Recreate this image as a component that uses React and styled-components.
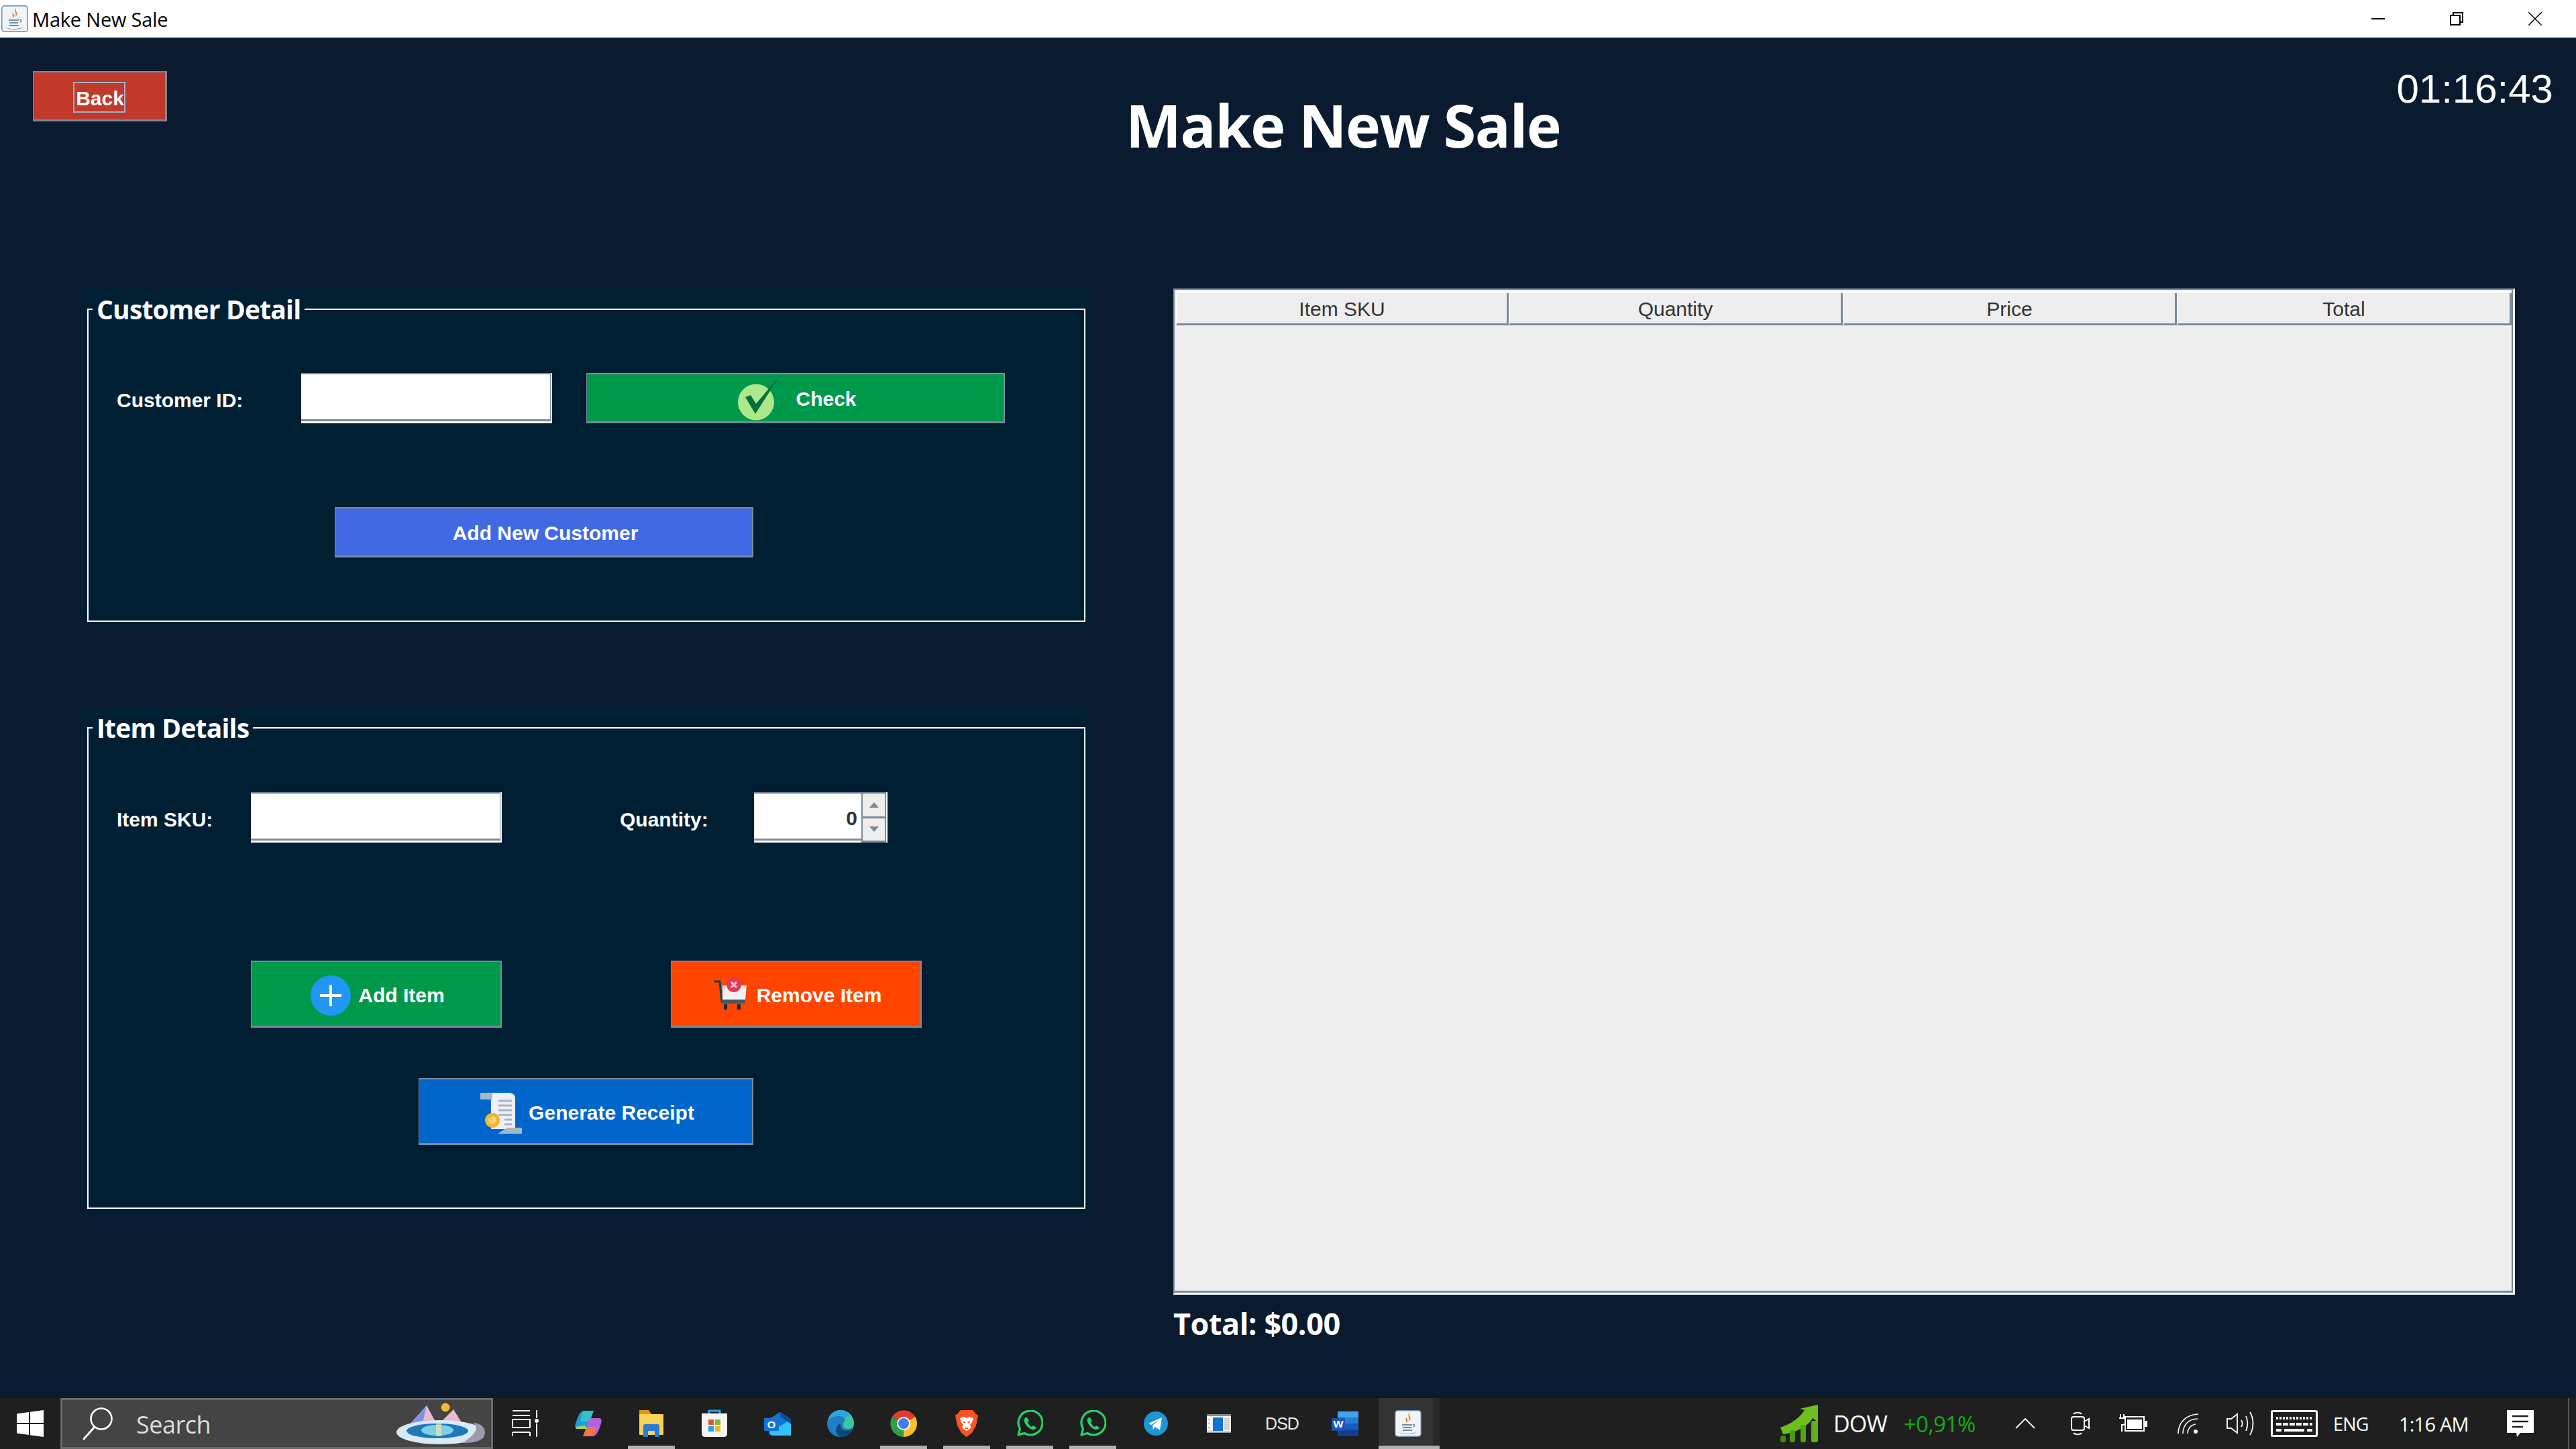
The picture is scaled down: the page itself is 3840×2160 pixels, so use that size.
import styled, { createGlobalStyle } from 'styled-components';

const GlobalStyle = createGlobalStyle`
  html, body {
    margin: 0;
    padding: 0;
    background: #0a1a2f;
  }
  * {
    box-sizing: border-box;
  }
`;

const uiFont = `'Open Sans', 'Noto Sans', sans-serif`;
const javaFont = `'Liberation Sans', Arial, sans-serif`;
const edge = '#7b8a9a';

const JavaLogo = ({ size = 40 }) => (
  <svg width={size} height={size} viewBox="0 0 40 40">
    <rect x="0.75" y="0.75" width="38.5" height="38.5" rx="4" fill="#f2f4f6" stroke="#6f8ca6" strokeWidth="1.5" />
    <path d="M22 4c-5 5 3 8-2 14 1-1 6-5 2-9-1-1 0-2 0-5zM18 11c-4 3 1 5-1 8 3-2 3-4 1-6z" fill="#e07a25" />
    <path d="M11 21h15v2H11zM12 25h13v2H12zM27 21c4-1 5 3 1 5l-1-1c2-1 2-3 0-3zM12 29h14v2H12zM7 33c4 3 20 3 25-1-2 5-23 5-25 1z" fill="#6d8ca8" />
  </svg>
);

const CheckIcon = () => (
  <svg width="56" height="72" viewBox="0 0 56 72" overflow="visible">
    <circle cx="28" cy="40.500" r="27" fill="#aee88a" />
    <path d="M12 33l15 25L64 0 28 43 20 30z" fill="#04703e" />
  </svg>
);

const PlusIcon = () => (
  <svg width="60" height="62" viewBox="0 0 60 62">
    <circle cx="30" cy="31" r="30" fill="#2196f3" />
    <path d="M14 31h32M30 15v32" stroke="#fff" strokeWidth="4" />
  </svg>
);

const CartIcon = () => (
  <svg width="52" height="54" viewBox="0 0 52 54">
    <path d="M0 6h9l3 31" stroke="#0f4560" strokeWidth="3" fill="none" />
    <path d="M13 12h36l-2 21H13z" fill="#f1f1f1" />
    <rect x="11" y="33" width="36" height="6" fill="#4b5660" />
    <rect x="15" y="40" width="5" height="8" fill="#143040" />
    <rect x="35" y="40" width="5" height="8" fill="#143040" />
    <circle cx="30" cy="11" r="11" fill="#e23a58" />
    <path d="M26 7l8 8M34 7l-8 8" stroke="#f6c6cf" strokeWidth="3" />
  </svg>
);

const ReceiptIcon = () => (
  <svg width="62" height="64" viewBox="0 0 62 64">
    <path d="M2 2h40c6 0 10 3 10 8v46H16V12C16 6 12 4 2 8z" fill="#edf1f7" />
    <path d="M0 2h18v10H0z" fill="#a9b6c9" />
    <path d="M40 54h22v9H26z" fill="#a9b6c9" />
    <path d="M27 14h20M27 21h20M27 28h20M27 35h20M36 42h11M36 49h11" stroke="#aab2c0" strokeWidth="3" />
    <circle cx="18" cy="43" r="11" fill="#f6b42c" />
    <circle cx="18" cy="43" r="6" fill="#f9d47a" />
  </svg>
);

const WindowsLogo = () => (
  <svg width="40" height="40" viewBox="0 0 40 40">
    <path d="M0 5.500l18-2.500v16H0zM20 2.700L40 0v19H20zM0 21h18v16L0 34.500zM20 21h20v19l-20-2.700z" fill="#fff" />
  </svg>
);

const SearchGlyph = () => (
  <svg width="48" height="50" viewBox="0 0 48 50">
    <circle cx="29" cy="18" r="15.500" fill="none" stroke="#fff" strokeWidth="2.600" />
    <path d="M19 30L3 48" stroke="#fff" strokeWidth="2.800" strokeLinecap="round" />
  </svg>
);

const MountainWidget = () => (
  <svg width="134" height="62" viewBox="0 0 134 62">
    <circle cx="74" cy="7" r="6.500" fill="#f8b732" />
    <path d="M14 40L46 4l16 30 24-24 20 32z" fill="#e7bccb" />
    <path d="M14 40L46 4l-8 34z" fill="#7f95e0" />
    <ellipse cx="66" cy="44" rx="65" ry="18" fill="#d7eaf6" />
    <path d="M100 60c24 0 33-6 33-16 0-8-8-14-18-14 8 6 8 14-15 30z" fill="#9b9cab" />
    <ellipse cx="62" cy="42" rx="46" ry="11" fill="#1f78b8" />
    <ellipse cx="62" cy="41" rx="24" ry="8" fill="#7fd0e6" />
    <rect x="60" y="30" width="8" height="20" fill="#e9e7a8" opacity="0.7" />
  </svg>
);

const TaskViewIcon = () => (
  <svg width="40" height="40" viewBox="0 0 40 40" fill="none" stroke="#fff" strokeWidth="2">
    <path d="M1 1h26M1 8h26M1 14h26v12H1zM1 33h26M1 39V33M27 39v-6M37 0v12M37 20v20" />
    <circle cx="37" cy="16" r="2" fill="#fff" />
  </svg>
);

const CopilotIcon = () => (
  <svg width="40" height="40" viewBox="0 0 40 40">
    <path d="M14 1h14L18 28H4C-1 28 0 22 2 17 5 8 8 1 14 1z" fill="#1d9ae0" />
    <path d="M14 1h14l-6 16H8C10 8 11 1 14 1z" fill="#2fc4c8" />
    <path d="M26 39H12l10-27h14c5 0 4 6 2 11-3 9-6 16-12 16z" fill="#b264dc" />
    <path d="M26 39H12l6-14h14c-2 7-3 14-6 14z" fill="#f4734a" />
    <path d="M18 28H4c-2 0-3-1-3-3l14-2z" fill="#a9d636" />
  </svg>
);

const ExplorerIcon = () => (
  <svg width="36" height="40" viewBox="0 0 36 40">
    <path d="M0 0h14l4 6v8H0z" fill="#d79a12" />
    <rect y="6" width="36" height="31" rx="1" fill="#fbd158" />
    <path d="M6 40V24c0-2 1-3 3-3h18c2 0 3 1 3 3v16h-7v-9H13v9z" fill="#2b7cd3" />
  </svg>
);

const StoreIcon = () => (
  <svg width="40" height="42" viewBox="0 0 40 42">
    <path d="M12 6V2h16v4" fill="none" stroke="#27a8e4" strokeWidth="3" />
    <path d="M1 6h38v30c0 3-2 5-5 5H6c-3 0-5-2-5-5z" fill="#f4f4f4" />
    <rect x="11" y="15" width="8" height="8" fill="#e8522c" />
    <rect x="21" y="15" width="8" height="8" fill="#7fba2a" />
    <rect x="11" y="25" width="8" height="8" fill="#1fa3e8" />
    <rect x="21" y="25" width="8" height="8" fill="#fbb90c" />
  </svg>
);

const OutlookIcon = () => (
  <svg width="40" height="35" viewBox="0 0 40 40" preserveAspectRatio="none">
    <path d="M8 12L24 0l16 12v28H14c-3 0-6-2-6-5z" fill="#35c2f2" />
    <path d="M8 12L24 0l16 12-16 12z" fill="#0f78d4" />
    <path d="M24 0l16 12v8L24 8z" fill="#0a4ea0" />
    <rect x="0" y="10" width="22" height="22" fill="#1272d6" />
    <BadgeLetter x="11" y="27">O</BadgeLetter>
  </svg>
);

const EdgeIcon = () => (
  <svg width="40" height="40" viewBox="0 0 40 40">
    <circle cx="20" cy="20" r="20" fill="#1e7ec6" />
    <path d="M2 14C5 4 13 0 20 0c11 0 20 9 20 20 0 4-3 8-8 8-6 0-8-3-8-6 0-6 4-6 2-10-3-4-14-5-24 2z" fill="#3cc7a0" />
    <path d="M26 12c-3-4-14-5-24 2 2-8 10-14 18-14 6 0 12 4 14 8-3 1-6 2-8 4z" fill="#29a6e0" />
    <path d="M38 28c-2 6-8 12-16 12-2 0-6-1-8-6-2-4 0-12 6-14-1 8 4 14 18 8z" fill="#10467e" />
  </svg>
);

const ChromeIcon = () => (
  <svg width="40" height="40" viewBox="0 0 40 40">
    <path d="M20 20L3 10A20 20 0 0 1 37.300 10z" fill="#e33b2e" />
    <path d="M20 20l17.300-10A20 20 0 0 1 20 40z" fill="#fbc02d" />
    <path d="M20 20v20A20 20 0 0 1 3 10z" fill="#2f9e44" />
    <circle cx="20" cy="20" r="10" fill="#fff" />
    <circle cx="20" cy="20" r="8" fill="#3f7fe8" />
  </svg>
);

const BraveIcon = () => (
  <svg width="34" height="40" viewBox="0 0 34 40">
    <path d="M8 0h18l4 5 4 3-3 15-6 11-8 6-8-6-6-11L0 8l4-3z" fill="#fb5420" />
    <path d="M7 12l6-2 4 2 4-2 6 2-2 6-3 4 2 4-7 5-7-5 2-4-3-4z" fill="#fff" />
    <path d="M12 17l3 2M22 17l-3 2M15 27h4" stroke="#fb5420" strokeWidth="2" />
  </svg>
);

const WhatsAppIcon = () => (
  <svg width="40" height="40" viewBox="0 0 40 40">
    <path d="M3 37l2.500-9A18 18 0 1 1 12 34.500z" fill="none" stroke="#25d366" strokeWidth="3.200" strokeLinejoin="round" />
    <path d="M14 11c-2 1-3 3-2 6 2 6 6 10 12 12 3 1 5-1 6-3l-5-3-2 2c-3-1-5-4-6-7l2-2-3-5z" fill="#25d366" />
  </svg>
);

const TelegramIcon = () => (
  <svg width="36" height="36" viewBox="0 0 36 36">
    <circle cx="18" cy="18" r="18" fill="#1f96d3" />
    <path d="M7 18l20-9-3 19-7-5-3 4-1-6 9-8-11 7z" fill="#fff" />
  </svg>
);

const AppIcon = () => (
  <svg width="36" height="28" viewBox="0 0 36 28">
    <rect width="36" height="28" fill="#f4f4f4" />
    <rect width="36" height="3" fill="#8d8d8d" />
    <rect y="26" width="36" height="2" fill="#9a9a9a" />
    <rect x="9" y="5" width="15" height="20" fill="#0f74d1" />
    <path d="M26 7h8M26 10h8M26 13h8M26 16h8M26 19h8M26 22h8M2 8h3M2 14h3M2 20h3" stroke="#9a9a9a" strokeWidth="1.200" />
  </svg>
);

const WordIcon = () => (
  <svg width="40" height="37" viewBox="0 0 40 40" preserveAspectRatio="none">
    <rect x="9" width="31" height="10" fill="#41a5ee" />
    <rect x="9" y="10" width="31" height="10" fill="#2b7cd3" />
    <rect x="9" y="20" width="31" height="10" fill="#185abd" />
    <rect x="9" y="30" width="31" height="10" fill="#103f91" />
    <rect y="11" width="20" height="20" fill="#1a56b8" />
    <BadgeLetter x="10" y="26">W</BadgeLetter>
  </svg>
);

const ChartIcon = () => (
  <svg width="56" height="56" viewBox="0 0 56 56">
    <path d="M0 34c18-6 30-16 36-26l-7-2 27-6v26l-8-6C42 32 22 42 4 44z" fill="#6fbf1a" />
    <rect x="0" y="46" width="8" height="10" rx="3" fill="#3a8c10" />
    <rect x="14" y="38" width="8" height="18" rx="3" fill="#489c12" />
    <rect x="30" y="30" width="8" height="26" rx="3" fill="#52a814" />
    <rect x="46" y="24" width="10" height="32" rx="3" fill="#5cb216" />
  </svg>
);

const CaretIcon = () => (
  <svg width="30" height="16" viewBox="0 0 30 16" fill="none" stroke="#fff" strokeWidth="1.800">
    <path d="M1 15L15 1l14 14" />
  </svg>
);

const CameraIcon = () => (
  <svg width="28" height="36" viewBox="0 0 28 36" fill="none" stroke="#fff" strokeWidth="2">
    <path d="M4 4c2-3 10-3 12 0M4 32c2 3 10 3 12 0" />
    <rect x="1" y="8" width="19" height="20" rx="3" />
    <path d="M20 15l7-4v14l-7-4" />
  </svg>
);

const BatteryIcon = () => (
  <svg width="42" height="28" viewBox="0 0 42 28" fill="none" stroke="#fff" strokeWidth="2">
    <path d="M2 0v6M7 0v6M0 6h9v7c0 2-2 3-5 3v10" />
    <rect x="9" y="4" width="28" height="21" />
    <rect x="12" y="8" width="22" height="14" fill="#fff" stroke="none" />
    <rect x="38" y="10" width="4" height="9" fill="#fff" stroke="none" />
  </svg>
);

const WifiIcon = () => (
  <svg width="32" height="30" viewBox="0 0 32 30" fill="none" stroke="#fff" strokeWidth="1.600">
    <path d="M1 30C1 14 12 2 31 1M8 30C8 18 16 8 30 8M15 30c0-7 5-13 12-14" />
    <circle cx="27" cy="27" r="3" fill="#fff" stroke="none" />
  </svg>
);

const SpeakerIcon = () => (
  <svg width="42" height="36" viewBox="0 0 42 36" fill="none" stroke="#fff" strokeWidth="1.800">
    <path d="M1 11h6l9-7v28l-9-7H1zM22 13c2 3 2 7 0 10M29 7c3 7 3 15 0 22M35 1c6 10 6 24 0 34" />
  </svg>
);

const KeyboardIcon = () => (
  <svg width="70" height="40" viewBox="0 0 70 40">
    <rect x="1.500" y="1.500" width="67" height="37" rx="1" fill="none" stroke="#fff" strokeWidth="3" />
    <path d="M8 12h54" stroke="#fff" strokeWidth="4" strokeDasharray="3 2" />
    <path d="M8 21h54" stroke="#fff" strokeWidth="4" strokeDasharray="8 2" />
    <path d="M8 30h8M20 30h30M54 30h8" stroke="#fff" strokeWidth="4" />
  </svg>
);

const NotificationIcon = () => (
  <svg width="40" height="40" viewBox="0 0 40 40">
    <path d="M0 0h40v34H20l-5 6-1-6H0z" fill="#fff" />
    <path d="M8 9h24M8 17h24M8 25h16" stroke="#222" strokeWidth="2.400" />
  </svg>
);

const columns = ['Item SKU', 'Quantity', 'Price', 'Total'];

export default function App() {
  const taskIcons = [
    { id: 'copilot', icon: <CopilotIcon /> },
    { id: 'explorer', icon: <ExplorerIcon />, open: true },
    { id: 'store', icon: <StoreIcon /> },
    { id: 'outlook', icon: <OutlookIcon /> },
    { id: 'edge', icon: <EdgeIcon /> },
    { id: 'chrome', icon: <ChromeIcon />, open: true },
    { id: 'brave', icon: <BraveIcon />, open: true },
    { id: 'wa1', icon: <WhatsAppIcon />, open: true },
    { id: 'wa2', icon: <WhatsAppIcon />, open: true },
    { id: 'telegram', icon: <TelegramIcon /> },
    { id: 'app', icon: <AppIcon /> },
    { id: 'dsd', icon: <DsdMark>DSD</DsdMark> },
    { id: 'word', icon: <WordIcon /> },
    { id: 'java', icon: <JavaLogo />, active: true },
  ];

  return (
    <>
      <GlobalStyle />
      <Page>
        <TitleBar>
          <JavaLogo />
          <WindowTitle>Make New Sale</WindowTitle>
          <WindowControls>
            <ControlSlot>
              <svg width="20" height="20" viewBox="0 0 20 20"><path d="M0 10h20" stroke="#000" strokeWidth="2" /></svg>
            </ControlSlot>
            <ControlSlot>
              <svg width="20" height="20" viewBox="0 0 20 20" fill="none" stroke="#000" strokeWidth="2"><rect x="1" y="5" width="14" height="14" /><path d="M5 5V1h14v14h-4" /></svg>
            </ControlSlot>
            <ControlSlot>
              <svg width="20" height="20" viewBox="0 0 20 20"><path d="M0 0l20 20M20 0L0 20" stroke="#000" strokeWidth="1.500" /></svg>
            </ControlSlot>
          </WindowControls>
        </TitleBar>

        <Main>
          <Header>
            <BackButton><BackLabel>Back</BackLabel></BackButton>
            <PageTitle>Make New Sale</PageTitle>
            <Clock>01:16:43</Clock>
          </Header>

          <Body>
            <LeftColumn>
              <Panel $height={503} $top={9}>
                <GroupBox $height={488}>
                  <GroupLegend>Customer Detail</GroupLegend>
                  <FormRow $top={73}>
                    <FieldLabel $width={275}>Customer ID:</FieldLabel>
                    <TextField />
                    <ActionButton $bg="#00994c" $width={624} $ml={51} $gap={31}>
                      <CheckIcon />
                      <span>Check</span>
                    </ActionButton>
                  </FormRow>
                  <FormRow $top={125} $left={325}>
                    <ActionButton $bg="#4169e1" $width={624}>Add New Customer</ActionButton>
                  </FormRow>
                </GroupBox>
              </Panel>

              <Panel $height={756} $top={7}>
                <GroupBox $height={739}>
                  <GroupLegend>Item Details</GroupLegend>
                  <FormRow $top={74}>
                    <FieldLabel $width={200}>Item SKU:</FieldLabel>
                    <TextField />
                    <FieldLabel $width={200} $ml={176}>Quantity:</FieldLabel>
                    <Spinner>
                      <SpinnerValue>0</SpinnerValue>
                      <SpinnerArrows>
                        <SpinnerArrow>
                          <svg width="14" height="8" viewBox="0 0 14 8"><path d="M0 8l7-8 7 8z" fill={edge} /></svg>
                        </SpinnerArrow>
                        <SpinnerArrow>
                          <svg width="14" height="8" viewBox="0 0 14 8"><path d="M0 0l7 8 7-8z" fill={edge} /></svg>
                        </SpinnerArrow>
                      </SpinnerArrows>
                    </Spinner>
                  </FormRow>
                  <FormRow $top={176} $left={200}>
                    <ActionButton $bg="#00994c" $width={374} $height={100} $gap={11}>
                      <PlusIcon />
                      <span>Add Item</span>
                    </ActionButton>
                    <ActionButton $bg="#ff4500" $width={374} $height={100} $ml={252} $gap={12}>
                      <CartIcon />
                      <span>Remove Item</span>
                    </ActionButton>
                  </FormRow>
                  <FormRow $top={75} $left={450}>
                    <ActionButton $bg="#0066cc" $width={499} $height={100} $gap={10}>
                      <ReceiptIcon />
                      <span>Generate Receipt</span>
                    </ActionButton>
                  </FormRow>
                </GroupBox>
              </Panel>
            </LeftColumn>

            <RightColumn>
              <TableFrame>
                <TableHead>
                  {columns.map(name => (
                    <HeadCell key={name}>{name}</HeadCell>
                  ))}
                </TableHead>
              </TableFrame>
              <TotalLine>Total: $0.00</TotalLine>
            </RightColumn>
          </Body>
        </Main>

        <Taskbar>
          <StartSlot><WindowsLogo /></StartSlot>
          <SearchBox>
            <SearchGlyph />
            <SearchText>Search</SearchText>
            <WidgetSlot><MountainWidget /></WidgetSlot>
          </SearchBox>
          <TaskViewSlot><TaskViewIcon /></TaskViewSlot>
          {taskIcons.map(({ id, icon, open, active }) => (
            <TaskSlot key={id} $open={open} $active={active}>{icon}</TaskSlot>
          ))}
          <Tray>
            <TrayItem $w={56}><ChartIcon /></TrayItem>
            <TrayText $w={84} $ml={23} $size={34}>DOW</TrayText>
            <TrayText $w={105} $ml={21} $size={33} $color="#10b010">+0,91%</TrayText>
            <TrayItem $w={30} $ml={61}><CaretIcon /></TrayItem>
            <TrayItem $w={28} $ml={53}><CameraIcon /></TrayItem>
            <TrayItem $w={42} $ml={44}><BatteryIcon /></TrayItem>
            <TrayItem $w={32} $ml={45}><WifiIcon /></TrayItem>
            <TrayItem $w={42} $ml={41}><SpeakerIcon /></TrayItem>
            <TrayItem $w={70} $ml={24}><KeyboardIcon /></TrayItem>
            <TrayText $w={55} $ml={23} $size={27}>ENG</TrayText>
            <TrayText $w={104} $ml={43} $size={29}>1:16 AM</TrayText>
            <TrayItem $w={40} $ml={57}><NotificationIcon /></TrayItem>
            <DesktopPeek />
          </Tray>
        </Taskbar>
      </Page>
    </>
  );
}

const BadgeLetter = styled.text`
  font-family: ${javaFont};
  font-weight: 700;
  font-size: 16px;
  fill: #fff;
  text-anchor: middle;
`;

const DsdMark = styled.span`
  font-family: ${javaFont};
  font-size: 25px;
  letter-spacing: -1px;
  color: #e6e6e6;
`;

const Page = styled.div`
  width: 3840px;
  height: 2160px;
  display: flex;
  flex-direction: column;
  overflow: hidden;
  background: #0a1a2f;
`;

const TitleBar = styled.div`
  height: 56px;
  flex: none;
  display: flex;
  align-items: center;
  padding-left: 2px;
  background: #fff;
`;

const WindowTitle = styled.span`
  margin-left: 6px;
  font-family: ${uiFont};
  font-size: 29px;
  letter-spacing: -0.200px;
  color: #000;
`;

const WindowControls = styled.div`
  margin-left: auto;
  display: flex;
  padding-right: 51px;
  gap: 97px;
`;

const ControlSlot = styled.div`
  width: 20px;
  height: 20px;
  display: flex;
`;

const Main = styled.main`
  flex: 1;
  min-height: 0;
  display: flex;
  flex-direction: column;
`;

const Header = styled.header`
  height: 374px;
  flex: none;
  display: flex;
  align-items: flex-start;
  padding: 50px 34px 0 49px;
`;

const BackButton = styled.button`
  width: 200px;
  height: 75px;
  padding: 14px 0 0;
  display: flex;
  justify-content: center;
  align-items: flex-start;
  background: #c0392b;
  border: 0;
  border-top: 2px solid ${edge};
  border-left: 1px solid ${edge};
  border-right: 3px solid ${edge};
  border-bottom: 3px solid ${edge};
  color: #fff;
`;

const BackLabel = styled.span`
  width: 78px;
  height: 46px;
  padding-left: 2px;
  border: 2px solid #9db0c4;
  font-family: ${javaFont};
  font-weight: 700;
  font-size: 30px;
  line-height: 46px;
  text-align: center;
  white-space: nowrap;
`;

const PageTitle = styled.h1`
  margin: 24px 0 0 1429px;
  font-family: ${uiFont};
  font-weight: 700;
  font-size: 88px;
  line-height: 112px;
  letter-spacing: -1.500px;
  color: #fff;
  white-space: nowrap;
`;

const Clock = styled.div`
  margin: 0 0 0 auto;
  font-family: ${javaFont};
  font-size: 60px;
  line-height: 54px;
  color: #fff;
`;

const Body = styled.div`
  flex: 1;
  display: flex;
  padding-left: 122px;
  gap: 124px;
`;

const LeftColumn = styled.div`
  width: 1503px;
  display: flex;
  flex-direction: column;
  gap: 123px;
`;

const Panel = styled.section`
  height: ${p => p.$height}px;
  padding: ${p => p.$top}px 7px 0 8px;
  background: #001f33;
`;

const GroupBox = styled.fieldset`
  margin: 0;
  padding: 0 0 0 42px;
  height: ${p => p.$height}px;
  border: 2px solid #fff;
`;

const GroupLegend = styled.legend`
  margin-left: -36px;
  padding: 0 6px;
  font-family: ${uiFont};
  font-weight: 700;
  font-size: 39px;
  line-height: 44px;
  letter-spacing: -0.800px;
  color: #fff;
`;

const FormRow = styled.div`
  display: flex;
  align-items: center;
  margin-top: ${p => p.$top}px;
  padding-left: ${p => p.$left || 0}px;
`;

const FieldLabel = styled.label`
  width: ${p => p.$width}px;
  margin-left: ${p => p.$ml || 0}px;
  padding-top: 6px;
  flex: none;
  font-family: ${javaFont};
  font-weight: 700;
  font-size: 30px;
  color: #fff;
`;

const TextField = styled.input`
  width: 374px;
  height: 75px;
  flex: none;
  padding: 0;
  border: 0;
  outline: 0;
  background: #fff;
  box-shadow: inset -2px -3px 0 #fff, inset -3px -6px 0 ${edge}, inset 0 2px 0 ${edge};
`;

const ActionButton = styled.button`
  width: ${p => p.$width}px;
  height: ${p => p.$height || 75}px;
  margin-left: ${p => p.$ml || 0}px;
  flex: none;
  display: flex;
  align-items: center;
  justify-content: center;
  gap: ${p => p.$gap || 0}px;
  padding: 4px 0 0 5px;
  background: ${p => p.$bg};
  border: 0;
  border-top: 2px solid ${edge};
  border-left: 1px solid ${edge};
  border-right: 2px solid ${edge};
  border-bottom: 3px solid ${edge};
  font-family: ${javaFont};
  font-weight: 700;
  font-size: 30px;
  color: #fff;
`;

const Spinner = styled.div`
  width: 199px;
  height: 75px;
  flex: none;
  display: flex;
  background: #fff;
  box-shadow: inset -2px -3px 0 #fff, inset -3px -6px 0 ${edge}, inset 0 2px 0 ${edge};
`;

const SpinnerValue = styled.div`
  width: 160px;
  padding: 7px 6px 0 0;
  text-align: right;
  font-family: ${javaFont};
  font-weight: 700;
  font-size: 30px;
  line-height: 64px;
  color: #333;
`;

const SpinnerArrows = styled.div`
  width: 37px;
  height: 75px;
  padding-top: 2px;
  display: flex;
  flex-direction: column;
`;

const SpinnerArrow = styled.div`
  flex: 1;
  display: flex;
  align-items: center;
  justify-content: center;
  background: #eee;
  border-left: 2px solid ${edge};
  border-right: 2px solid ${edge};
  border-bottom: 3px solid ${edge};
`;

const RightColumn = styled.div`
  width: 2000px;
  display: flex;
  flex-direction: column;
`;

const TableFrame = styled.div`
  height: 1500px;
  flex: none;
  padding: 2px 0 0 2px;
  background: #eee;
  border-top: 2px solid ${edge};
  border-left: 2px solid ${edge};
  border-right: 3px solid #fff;
  border-bottom: 3px solid #fff;
  box-shadow: inset -2px -3px 0 ${edge};
`;

const TableHead = styled.div`
  display: grid;
  grid-template-columns: 496px 498px 498px 1fr;
  height: 51px;
  border-top: 3px solid #fff;
  margin-right: 2px;
`;

const HeadCell = styled.div`
  display: flex;
  align-items: center;
  justify-content: center;
  padding-top: 2px;
  border-left: 2px solid #fff;
  border-right: 3px solid ${edge};
  border-bottom: 3px solid ${edge};
  font-family: ${javaFont};
  font-size: 30px;
  color: #333;
`;

const TotalLine = styled.div`
  margin-top: 15px;
  font-family: ${uiFont};
  font-weight: 700;
  font-size: 45px;
  line-height: 56px;
  letter-spacing: -0.500px;
  color: #fff;
`;

const Taskbar = styled.footer`
  height: 76px;
  flex: none;
  display: flex;
  background: #1f1f1f;
`;

const StartSlot = styled.div`
  width: 90px;
  flex: none;
  display: flex;
  align-items: center;
  justify-content: center;
`;

const SearchBox = styled.div`
  width: 645px;
  flex: none;
  display: flex;
  align-items: center;
  padding-left: 29px;
  background: #444;
  border: 3px solid #6a6a6a;
`;

const SearchText = styled.span`
  margin: 2px 0 0 33px;
  font-family: ${uiFont};
  font-size: 36px;
  letter-spacing: -0.500px;
  color: #ddd;
`;

const WidgetSlot = styled.div`
  margin-left: auto;
  display: flex;
  padding-right: 8px;
`;

const TaskViewSlot = styled.div`
  width: 95px;
  flex: none;
  display: flex;
  align-items: center;
  justify-content: center;
`;

const TaskSlot = styled.div`
  position: relative;
  width: 94px;
  flex: none;
  display: flex;
  align-items: center;
  justify-content: center;
  background: ${p => (p.$active ? 'linear-gradient(to right, #1f1f1f 3px, #333 3px, #333 84px, #292929 84px)' : 'transparent')};

  &::after {
    content: '';
    display: ${p => (p.$open || p.$active ? 'block' : 'none')};
    position: absolute;
    bottom: 0;
    left: ${p => (p.$active ? '3px' : '12px')};
    right: ${p => (p.$active ? 0 : '12px')};
    height: 5px;
    background: #b0b0b0;
  }
`;

const Tray = styled.div`
  margin-left: auto;
  display: flex;
  align-items: center;
`;

const TrayItem = styled.div`
  width: ${p => p.$w}px;
  margin-left: ${p => p.$ml || 0}px;
  flex: none;
  display: flex;
  align-items: center;
  justify-content: center;
`;

const TrayText = styled.div`
  width: ${p => p.$w}px;
  margin-left: ${p => p.$ml || 0}px;
  flex: none;
  font-family: ${uiFont};
  font-size: ${p => p.$size || 32}px;
  letter-spacing: -0.800px;
  white-space: nowrap;
  color: ${p => p.$color || '#fff'};
`;

const DesktopPeek = styled.div`
  width: 2px;
  height: 76px;
  margin: 0 10px 0 51px;
  background: #555;
`;
